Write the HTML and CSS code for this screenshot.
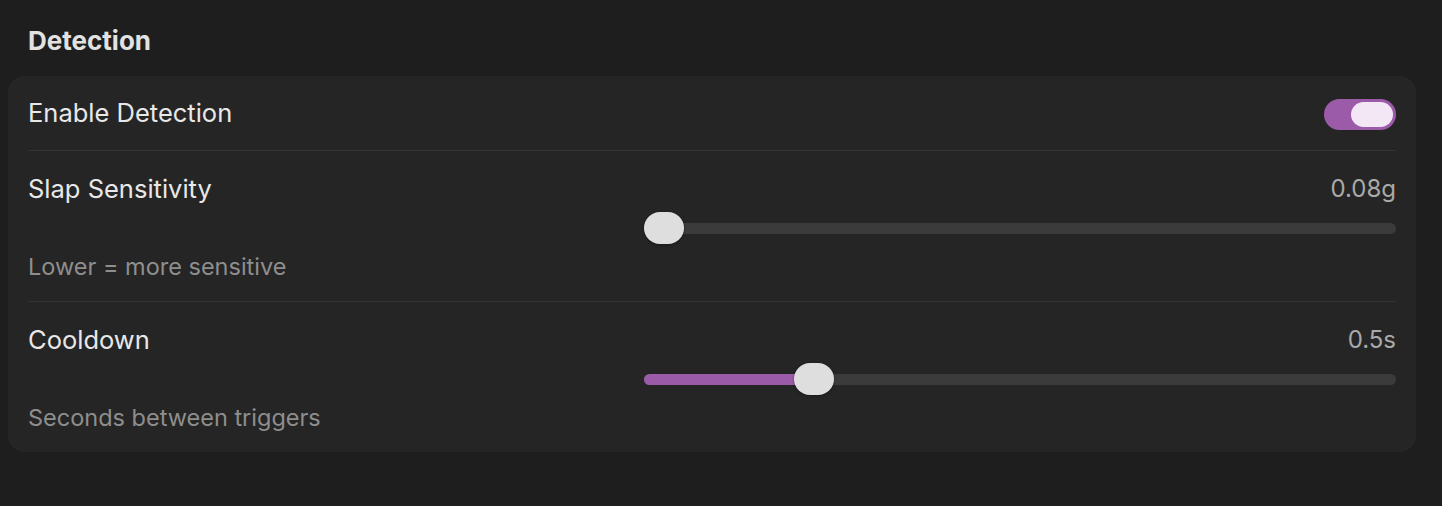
FILE: index.html
```html
<!DOCTYPE html>
<html>
<head>
<meta charset="utf-8">
<link rel="stylesheet" href="styles.css">
</head>
<body>
<div class="page">
  <h2 class="section-title">Detection</h2>
  <div class="card">
    <div class="row row-toggle">
      <span class="label">Enable Detection</span>
      <div class="toggle on"><div class="toggle-knob"></div></div>
    </div>
    <div class="row row-slider">
      <div class="row-head">
        <span class="label">Slap Sensitivity</span>
        <span class="value">0.08g</span>
      </div>
      <div class="slider-line">
        <div class="slider">
          <div class="track"></div>
          <div class="fill" style="width: 20px;"></div>
          <div class="knob" style="left: 0px;"></div>
        </div>
      </div>
      <div class="hint">Lower = more sensitive</div>
    </div>
    <div class="row row-slider last">
      <div class="row-head">
        <span class="label">Cooldown</span>
        <span class="value">0.5s</span>
      </div>
      <div class="slider-line">
        <div class="slider">
          <div class="track"></div>
          <div class="fill" style="width: 170px;"></div>
          <div class="knob" style="left: 150px;"></div>
        </div>
      </div>
      <div class="hint">Seconds between triggers</div>
    </div>
  </div>
</div>
</body>
</html>
```

FILE: styles.css
```css
html, body {
  margin: 0;
  padding: 0;
  background: #1e1e1e;
  width: 1442px;
  height: 506px;
  overflow: hidden;
}

body {
  font-family: Inter, "Noto Sans", "Liberation Sans", sans-serif;
  color: #e6e6e6;
}

.page {
  padding: 25px 0 0 8px;
}

.section-title {
  margin: 0 0 19px 0;
  padding-left: 20px;
  font-size: 26px;
  line-height: 32px;
  font-weight: 700;
  color: #e2e2e2;
}

.card {
  width: 1408px;
  box-sizing: border-box;
  background: #252525;
  border-radius: 16px;
  padding: 0 20px;
}

.row {
  border-bottom: 1px solid #333333;
}

.row.last {
  border-bottom: none;
}

.row-toggle {
  height: 74px;
  display: flex;
  align-items: center;
  justify-content: space-between;
}

.label {
  font-size: 25.5px;
  line-height: 32px;
  color: #e8e8e8;
}

.toggle {
  width: 72px;
  height: 31px;
  border-radius: 16px;
  background: #9c5ba8;
  position: relative;
  margin-top: 2px;
}

.toggle-knob {
  position: absolute;
  right: 3px;
  top: 3px;
  width: 42px;
  height: 25px;
  border-radius: 13px;
  background: #f3e7f5;
}

.row-slider {
  padding: 22px 0 20px 0;
  display: flex;
  flex-direction: column;
}

.row-head {
  display: flex;
  justify-content: space-between;
  align-items: center;
}

.value {
  font-size: 24px;
  line-height: 32px;
  color: #a9a9a9;
}

.slider-line {
  display: flex;
  justify-content: flex-end;
  margin-top: 7px;
}

.slider {
  width: 752px;
  height: 32px;
  position: relative;
}

.track {
  position: absolute;
  left: 0;
  right: 0;
  top: 11px;
  height: 11px;
  border-radius: 6px;
  background: #3b3b3b;
}

.fill {
  position: absolute;
  left: 0;
  top: 11px;
  height: 11px;
  border-radius: 6px 0 0 6px;
  background: #9c5ba8;
}

.knob {
  position: absolute;
  top: 0;
  width: 40px;
  height: 32px;
  border-radius: 16px;
  background: #dedede;
  box-shadow: 0 1px 3px rgba(0, 0, 0, 0.35);
}

.hint {
  margin-top: 9px;
  font-size: 23.5px;
  line-height: 28px;
  color: #8e8e8e;
}
```
